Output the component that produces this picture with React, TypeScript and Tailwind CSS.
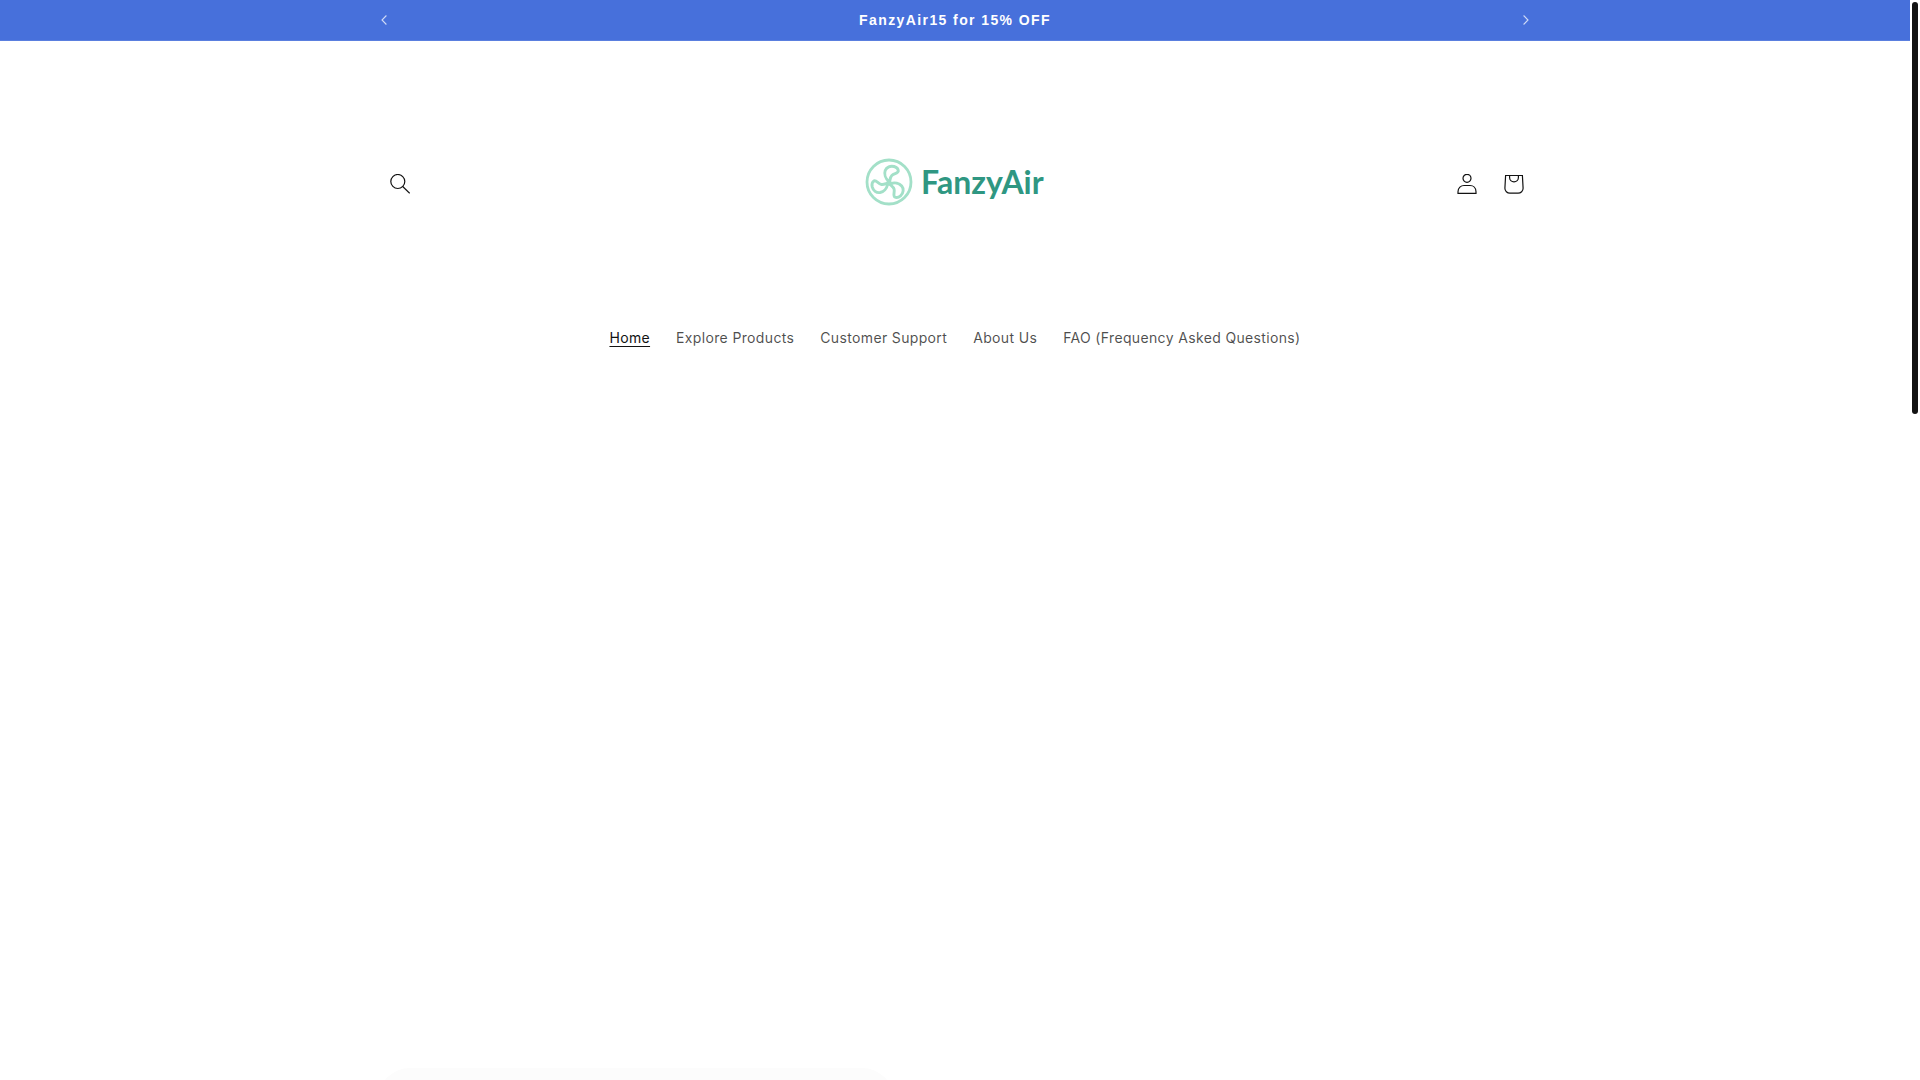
import React from "react";

const links = [
  "Home",
  "Explore Products",
  "Customer Support",
  "About Us",
  "FAO (Frequency Asked Questions)",
];

function Chevron({ flip = false }: { flip?: boolean }) {
  return (
    <svg
      viewBox="0 0 6 10"
      className={flip ? "h-[10px] w-[6px] rotate-180" : "h-[10px] w-[6px]"}
      fill="none"
      stroke="currentColor"
      strokeWidth="1.1"
      aria-hidden="true"
    >
      <path d="M5.4 .5 1 5l4.400 4.500" />
    </svg>
  );
}

function AnnouncementBar() {
  return (
    <section
      aria-label="Announcement"
      className="border-b border-[#5a7fdf] bg-[#4770db] text-white"
    >
      <div className="mx-auto flex h-10 max-w-[1186px] items-center justify-between">
        <button type="button" aria-label="Previous announcement" className="flex size-11 items-center justify-center text-white/75">
          <Chevron />
        </button>
        <p className="font-['Liberation_Sans',Arial,sans-serif] text-sm font-bold tracking-widest">
          FanzyAir15 for 15% OFF
        </p>
        <button type="button" aria-label="Next announcement" className="flex size-11 items-center justify-center text-white/75">
          <Chevron flip />
        </button>
      </div>
    </section>
  );
}

const blade =
  "M23.500 23C20.500 20.500 19 16 20.200 12.500C21.500 9 25.500 7.500 29 8.500C31.500 9.300 33.300 11.200 33.300 13C33 15.500 29 15.300 26.800 17.500C25.300 19 25.200 21 24.800 23";

function Logo() {
  return (
    <a href="#" className="flex h-[245px] w-[180px] items-center gap-2 pb-1">
      <svg viewBox="0 0 48 48" className="size-12 shrink-0" fill="none" stroke="#a3e0c8" aria-hidden="true">
        <circle cx="24" cy="24" r="22" strokeWidth="2.800" />
        <g strokeWidth="2.900" strokeLinejoin="round" strokeLinecap="round">
          <path d={blade} />
          <path d={blade} transform="rotate(120 24 25)" />
          <path d={blade} transform="rotate(240 24 25)" />
          <circle cx="24" cy="25" r="1.200" />
        </g>
      </svg>
      <span className="font-['Lato',sans-serif] text-[32px] leading-10 font-bold text-[#2f9782]">
        FanzyAir
      </span>
    </a>
  );
}

function Header() {
  return (
    <header className="py-5">
      <div className="mx-auto grid max-w-[1162px] grid-cols-[1fr_auto_1fr] items-center">
        <button type="button" aria-label="Search" className="ml-1 flex size-11 items-center justify-center">
          <svg viewBox="0 0 20 20" className="size-5" fill="none" stroke="currentColor" strokeWidth="1.200" aria-hidden="true">
            <circle cx="7.800" cy="7.500" r="7" />
            <path d="m12.700 12.500 7 6.800" />
          </svg>
        </button>
        <Logo />
        <div className="flex justify-end gap-[3px]">
          <a href="#" aria-label="Log in" className="flex size-11 items-center justify-center">
            <svg viewBox="0 0 20 20" className="size-5" fill="none" stroke="currentColor" strokeWidth="1.200" aria-hidden="true">
              <circle cx="10" cy="4.300" r="4" />
              <path d="M1 19.300v-1.500c0-4 3-6.300 6-6.300h6c3.300 0 6 2.300 6 6.300v1.500z" />
            </svg>
          </a>
          <a href="#" aria-label="Cart" className="flex size-11 items-center justify-center">
            <svg viewBox="0 0 20 20" className="size-5" fill="none" stroke="currentColor" strokeWidth="1.200" aria-hidden="true">
              <path d="M1.600 1.500h16.800l.7 12.700a5 5 0 0 1-5 5H5.900a5 5 0 0 1-5-5z" />
              <path d="M5.600 1.500v2a4.400 4.400 0 0 0 8.800 0v-2" />
            </svg>
          </a>
        </div>
      </div>
      <nav aria-label="Main" className="mt-3 flex justify-center">
        <ul className="flex flex-wrap justify-center font-['Inter',sans-serif] text-sm text-[#121212]/75">
          {links.map((label, i) => (
            <li key={label}>
              <a
                href="#"
                aria-current={i === 0 ? "page" : undefined}
                className="block px-[13px] py-2.5 tracking-wide hover:underline aria-[current=page]:text-[#121212] aria-[current=page]:underline aria-[current=page]:underline-offset-3"
              >
                {label}
              </a>
            </li>
          ))}
        </ul>
      </nav>
    </header>
  );
}

export default function App() {
  return (
    <div className="relative h-screen overflow-hidden bg-white pr-[10px] text-[#121212]">
      <AnnouncementBar />
      <Header />
      <main className="mx-auto max-w-[1154px] pt-[690px]">
        <div className="h-[400px] w-[516px] rounded-[32px] bg-[#fcfcfc]" />
      </main>
      <div className="absolute top-0.5 right-0.5 h-[412px] w-1.5 rounded-full bg-[#121212]" />
    </div>
  );
}
